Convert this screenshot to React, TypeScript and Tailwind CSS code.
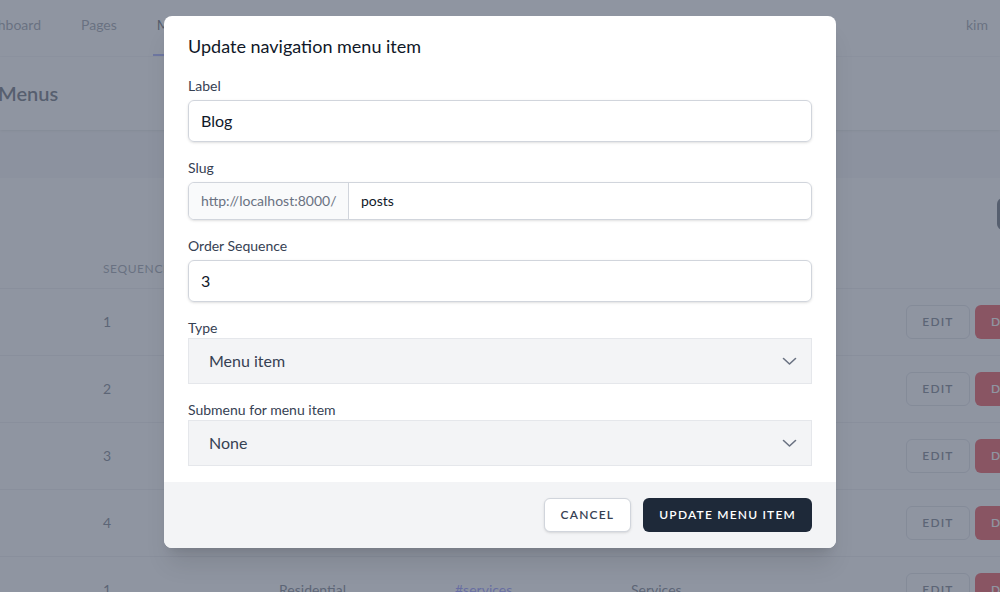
const rows = [
  { seq: 1, type: 'Menu item', slug: '#home', label: 'Home' },
  { seq: 2, type: 'Menu item', slug: '#about', label: 'About' },
  { seq: 3, type: 'Menu item', slug: 'posts', label: 'Blog' },
  { seq: 4, type: 'Menu item', slug: '#contact', label: 'Contact' },
  { seq: 1, type: 'Residential', slug: '#services', label: 'Services' },
]

function SelectBox({ value }: { value: string }) {
  return (
    <div className="flex h-[46px] items-center justify-between border border-gray-200 bg-gray-100 pl-5 pr-[14px] text-base text-gray-700">
      <span>{value}</span>
      <svg width="15" height="9" viewBox="0 0 15 9" fill="none" className="text-gray-500">
        <path d="M1.5 1.5 L7.5 7 L13.5 1.5" stroke="currentColor" strokeWidth="1.6" strokeLinecap="round" strokeLinejoin="round" />
      </svg>
    </div>
  )
}

export default function App() {
  return (
    <div className="relative h-[592px] overflow-hidden bg-gray-100 font-['Lato',sans-serif]">
      {/* nav */}
      <nav className="flex h-[57px] items-stretch justify-between border-b border-gray-100 bg-white pr-3">
        <div className="flex items-stretch gap-8">
          <div className="flex w-[45px] items-center justify-end overflow-hidden whitespace-nowrap border-b-2 border-transparent px-1 pb-1 text-sm text-gray-500">
            Dashboard
          </div>
          <div className="flex items-center border-b-2 border-transparent px-1 pb-1 text-sm text-gray-500">Pages</div>
          <div className="flex items-center border-b-2 border-indigo-400 px-1 pb-1 text-sm text-gray-900">Menus</div>
        </div>
        <div className="flex items-center pb-1.5 text-sm text-gray-500">kim</div>
      </nav>

      {/* header */}
      <header className="bg-white shadow">
        <div className="py-6">
          <h2 className="-ml-[2px] text-xl font-semibold leading-tight text-gray-800">Menus</h2>
        </div>
      </header>

      {/* content */}
      <main className="pt-12">
        <div className="bg-white">
          <div className="flex h-[72px] items-center justify-end">
            <div className="-mr-[60px] flex h-8 w-[63px] shrink-0 items-center rounded-md bg-gray-800 px-4 text-xs font-semibold uppercase tracking-widest text-white">
              Add
            </div>
          </div>
          <div className="flex h-[39px] items-center border-b border-gray-200 pl-[103px] text-xs uppercase tracking-wider text-gray-500">
            <span className="w-[176px] shrink-0">Sequence</span>
            <span className="w-[176px] shrink-0">Type</span>
            <span className="w-[176px] shrink-0">Slug</span>
            <span className="w-[176px] shrink-0">Label</span>
          </div>
          {rows.map((r, i) => (
            <div key={i} className="flex h-[67px] items-center border-b border-gray-200 pl-[103px] text-sm text-gray-700">
              <span className="w-[176px] shrink-0">{r.seq}</span>
              <span className="w-[176px] shrink-0">{r.type}</span>
              <span className="w-[176px] shrink-0 text-indigo-500">{r.slug}</span>
              <span className="w-[176px] shrink-0">{r.label}</span>
              <div className="ml-[99px] flex shrink-0 items-center gap-[5px]">
                <div className="flex h-[34px] w-[64px] items-center justify-center rounded-md border border-gray-300 bg-white text-xs font-semibold uppercase tracking-widest text-gray-700">
                  Edit
                </div>
                <div className="flex h-[34px] w-[80px] items-center rounded-md bg-red-600 px-4 text-xs font-semibold uppercase tracking-widest text-white">
                  Delete
                </div>
              </div>
            </div>
          ))}
        </div>
      </main>

      {/* overlay */}
      <div className="absolute inset-0 bg-gray-500/75" />

      {/* modal */}
      <div className="absolute inset-0 flex justify-center pt-4">
        <div className="h-fit w-[672px] overflow-hidden rounded-lg bg-white shadow-xl">
          <div className="px-6 py-4">
            <div className="text-lg leading-7 font-normal text-gray-900">Update navigation menu item</div>
            <div className="mt-4 text-sm text-gray-600">
              <label className="block text-sm text-gray-700">Label</label>
              <div className="mt-1 flex h-[42px] items-center rounded-md border border-gray-300 px-3 text-base text-gray-900 shadow-sm">
                Blog
              </div>

              <label className="mt-4 block text-sm text-gray-700">Slug</label>
              <div className="mt-1 flex h-[38px] rounded-md border border-gray-300 shadow-sm">
                <span className="flex w-[160px] items-center rounded-l-md border-r border-gray-300 bg-gray-50 px-3 text-sm text-gray-500">
                  http://localhost:8000/
                </span>
                <span className="flex items-center px-3 text-sm text-gray-900">posts</span>
              </div>

              <label className="mt-4 block text-sm text-gray-700">Order Sequence</label>
              <div className="mt-1 flex h-[42px] items-center rounded-md border border-gray-300 px-3 text-base text-gray-900 shadow-sm">
                3
              </div>

              <label className="mt-4 block text-sm text-gray-700">Type</label>
              <SelectBox value="Menu item" />

              <label className="mt-4 block text-sm text-gray-700">Submenu for menu item</label>
              <SelectBox value="None" />
            </div>
          </div>
          <div className="flex justify-end bg-gray-100 px-6 py-4">
            <button className="flex h-[34px] items-center rounded-md border border-gray-300 bg-white px-4 text-xs font-semibold uppercase tracking-widest text-gray-700 shadow-sm">
              Cancel
            </button>
            <button className="ml-3 flex h-[34px] items-center rounded-md bg-gray-800 px-4 text-xs font-semibold uppercase tracking-widest text-white">
              Update Menu Item
            </button>
          </div>
        </div>
      </div>
    </div>
  )
}
